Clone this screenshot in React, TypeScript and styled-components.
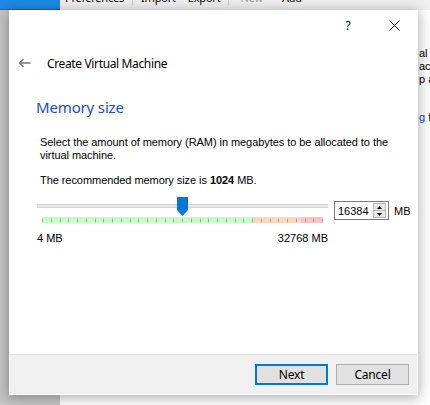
import React from "react";
import styled, { createGlobalStyle } from "styled-components";

const GlobalStyle = createGlobalStyle`
  html, body { margin: 0; padding: 0; }
  body {
    width: 430px;
    height: 405px;
    overflow: hidden;
    background: #ffffff;
    font-family: "Liberation Sans", Arial, sans-serif;
  }
`;

const UI_FONT = `"Noto Sans", "Open Sans", sans-serif`;
const DLG_FONT = `"Liberation Sans", Arial, sans-serif`;

const Desktop = styled.div`
  position: relative;
  width: 430px;
  height: 405px;
  overflow: hidden;
`;

const MainWindow = styled.div`
  display: flex;
  flex-direction: column;
  width: 100%;
  height: 100%;
`;

const TopStrip = styled.div`
  display: flex;
  height: 10px;
  flex: none;
`;

const BlueTab = styled.div`
  width: 60px;
  box-sizing: border-box;
  background: #1c8ae6;
  border-bottom: 1px solid #0b6bc0;
`;

const Toolbar = styled.div`
  flex: 1;
  display: flex;
  align-items: flex-end;
  background: #f0f0f0;
  overflow: hidden;
  font-family: ${UI_FONT};
  font-size: 11px;
  line-height: 12px;
  letter-spacing: -0.2px;
`;

const ToolItem = styled.span<{ $muted?: boolean; $pad: number }>`
  margin-bottom: 6px;
  padding-left: ${(p) => p.$pad}px;
  color: ${(p) => (p.$muted ? "#a0a0a0" : "#000")};
  white-space: nowrap;
`;

const ToolSep = styled.span<{ $pad: number }>`
  align-self: stretch;
  width: 1px;
  margin-left: ${(p) => p.$pad}px;
  margin-bottom: 5px;
  background: #c8c8c8;
`;

const MainBody = styled.div`
  flex: 1;
  display: flex;
`;

const Sidebar = styled.div`
  width: 60px;
  background: #c6c6c6;
`;

const Pane = styled.div`
  flex: 1;
  background: #ffffff;
  padding: 37px 0 0 359px;
  font-family: ${DLG_FONT};
  font-size: 11px;
  line-height: 12.8px;
  color: #000;
  white-space: pre;
  overflow: hidden;
`;

const Link = styled.span`
  color: #0645c8;
  text-decoration: underline;
`;

const Dialog = styled.div`
  position: absolute;
  left: 9px;
  top: 10px;
  width: 409px;
  height: 385px;
  box-sizing: border-box;
  border: 1px solid #ffffff;
  background: #ffffff;
  box-shadow: 0 2px 12px 1px rgba(0, 0, 0, 0.32);
  display: flex;
  flex-direction: column;
`;

const TitleBar = styled.div`
  display: flex;
  justify-content: flex-end;
  height: 29px;
  flex: none;
`;

const CaptionButton = styled.div`
  width: 46px;
  height: 29px;
  display: flex;
  align-items: center;
  justify-content: center;
  font-family: ${UI_FONT};
  font-size: 12px;
  color: #000;
`;

const Header = styled.div`
  display: flex;
  align-items: center;
  height: 28px;
  margin-top: 9px;
  padding-left: 8px;
  flex: none;
`;

const HeaderTitle = styled.span`
  margin: 2px 0 0 16px;
  font-family: ${UI_FONT};
  font-size: 12px;
  line-height: 16px;
  letter-spacing: -0.36px;
  color: #000;
`;

const Page = styled.div`
  display: flex;
  flex-direction: column;
  padding-left: 26px;
`;

const Heading = styled.h1`
  margin: 20px 0 0 0;
  font-family: ${UI_FONT};
  font-weight: 400;
  font-size: 15px;
  line-height: 20px;
  letter-spacing: -0.15px;
  color: #1d4dc4;
`;

const Text = styled.p<{ $top: number }>`
  margin: ${(p) => p.$top}px 0 0 0;
  padding-left: 4px;
  width: 360px;
  font-family: ${DLG_FONT};
  font-size: 11px;
  line-height: 13px;
  letter-spacing: -0.06px;
  color: #000;
`;

const SliderRow = styled.div`
  display: flex;
  align-items: flex-start;
  margin: 10px 0 0 1px;
`;

const Slider = styled.div`
  position: relative;
  width: 291px;
  height: 27px;
  flex: none;
`;

const Track = styled.div`
  position: absolute;
  left: 0;
  right: 0;
  top: 7px;
  height: 4px;
  box-sizing: border-box;
  background: #e7e7e7;
  border-top: 1px solid #d6d6d6;
  border-bottom: 1px solid #d6d6d6;
`;

const Scale = styled.svg`
  position: absolute;
  left: 5px;
  top: 20px;
`;

const Handle = styled.svg`
  position: absolute;
  top: 0;
`;

const SpinBox = styled.div`
  display: flex;
  align-items: center;
  width: 55px;
  height: 19px;
  box-sizing: border-box;
  margin: 4px 0 0 6px;
  border: 1px solid #7a7a7a;
  background: #fff;
`;

const SpinValue = styled.span`
  flex: 1;
  padding-left: 3px;
  font-family: ${DLG_FONT};
  font-size: 11px;
  color: #000;
`;

const SpinButtons = styled.div`
  display: flex;
  flex-direction: column;
  width: 13px;
  height: 15px;
  margin-right: 2px;
  box-sizing: border-box;
  border: 1px solid #b9b9b9;
  background: #e8e8e8;
`;

const SpinHalf = styled.div<{ $top?: boolean }>`
  flex: 1;
  display: flex;
  align-items: center;
  justify-content: center;
  border-bottom: ${(p) => (p.$top ? "1px solid #b9b9b9" : "none")};
`;

const Unit = styled.span`
  margin: 8px 0 0 5px;
  font-family: ${DLG_FONT};
  font-size: 11px;
  line-height: 13px;
  color: #000;
`;

const Limits = styled.div`
  display: flex;
  justify-content: space-between;
  width: 291px;
  margin: 8px 0 0 1px;
  font-family: ${DLG_FONT};
  font-size: 11px;
  line-height: 13px;
  color: #000;
`;

const Footer = styled.div`
  margin-top: auto;
  display: flex;
  justify-content: flex-end;
  gap: 8px;
  height: 40px;
  box-sizing: border-box;
  padding: 9px 8px 0 0;
  border-top: 1px solid #dfdfdf;
  background: #f0f0f0;
  flex: none;
`;

const Button = styled.button<{ $primary?: boolean }>`
  width: 73px;
  height: 21px;
  box-sizing: border-box;
  padding: 0;
  border: ${(p) => (p.$primary ? "2px solid #0078d7" : "1px solid #adadad")};
  background: #e1e1e1;
  font-family: ${UI_FONT};
  font-size: 12px;
  letter-spacing: -0.2px;
  color: #000;
  display: flex;
  align-items: center;
  justify-content: center;
`;

const MIN = 4;
const MAX = 32768;
const VALUE = 16384;
const SCALE_W = 281;
const GREEN_END = 210;
const PEACH_END = 259;

export default function App() {
  const handleLeft = 5 + ((VALUE - MIN) / (MAX - MIN)) * SCALE_W - 5;
  const ticks = Array.from({ length: 33 }, (_, i) => 0.5 + (i * (SCALE_W - 1)) / 32);
  return (
    <>
      <GlobalStyle />
      <Desktop>
        <MainWindow>
          <TopStrip>
            <BlueTab />
            <Toolbar>
              <ToolItem $pad={5}>Preferences</ToolItem>
              <ToolSep $pad={8} />
              <ToolItem $pad={8}>Import</ToolItem>
              <ToolItem $pad={12}>Export</ToolItem>
              <ToolSep $pad={8} />
              <ToolItem $pad={11} $muted>
                New
              </ToolItem>
              <ToolItem $pad={19}>Add</ToolItem>
            </Toolbar>
          </TopStrip>
          <MainBody>
            <Sidebar />
            <Pane>
              {"al\nac\np a\n\n\n"}
              <Link>g</Link>
              {" f"}
            </Pane>
          </MainBody>
        </MainWindow>

        <Dialog>
          <TitleBar>
            <CaptionButton>?</CaptionButton>
            <CaptionButton>
              <svg width="11" height="11" viewBox="0 0 11 11">
                <path d="M0.5 0.5 L10.5 10.5 M10.5 0.5 L0.5 10.5" stroke="#000" strokeWidth="1" fill="none" />
              </svg>
            </CaptionButton>
          </TitleBar>
          <Header>
            <svg width="13" height="10" viewBox="0 0 13 10">
              <path d="M12.5 5 H1.5 M5.5 1 L1.5 5 L5.5 9" stroke="#7a7a7a" strokeWidth="1.4" fill="none" />
            </svg>
            <HeaderTitle>Create Virtual Machine</HeaderTitle>
          </Header>
          <Page>
            <Heading>Memory size</Heading>
            <Text $top={19}>
              Select the amount of memory (RAM) in megabytes to be allocated to the virtual machine.
            </Text>
            <Text $top={12}>
              The recommended memory size is <b>1024</b> MB.
            </Text>
            <SliderRow>
              <Slider>
                <Track />
                <Scale width={SCALE_W} height={6} viewBox={`0 0 ${SCALE_W} 6`}>
                  <rect x="0" y="0" width={GREEN_END} height="6" fill="#c6fcc6" />
                  <rect x={GREEN_END} y="0" width={PEACH_END - GREEN_END} height="6" fill="#fdd6c2" />
                  <rect x={PEACH_END} y="0" width={SCALE_W - PEACH_END} height="6" fill="#fdc2c2" />
                  {ticks.map((x, i) => (
                    <line key={i} x1={Math.round(x - 0.5) + 0.5} x2={Math.round(x - 0.5) + 0.5} y1="1.5" y2="5" stroke="#a4a4a4" strokeWidth="1" />
                  ))}
                </Scale>
                <Handle width="11" height="19" viewBox="0 0 11 19" style={{ left: `${handleLeft}px` }}>
                  <path d="M0 0 H11 V13 L5.5 19 L0 13 Z" fill="#0078d7" />
                </Handle>
              </Slider>
              <SpinBox>
                <SpinValue>16384</SpinValue>
                <SpinButtons>
                  <SpinHalf $top>
                    <svg width="5" height="3" viewBox="0 0 5 3">
                      <path d="M0 3 L2.5 0 L5 3 Z" fill="#000" />
                    </svg>
                  </SpinHalf>
                  <SpinHalf>
                    <svg width="5" height="3" viewBox="0 0 5 3">
                      <path d="M0 0 L2.5 3 L5 0 Z" fill="#000" />
                    </svg>
                  </SpinHalf>
                </SpinButtons>
              </SpinBox>
              <Unit>MB</Unit>
            </SliderRow>
            <Limits>
              <span>4 MB</span>
              <span>32768 MB</span>
            </Limits>
          </Page>
          <Footer>
            <Button $primary>Next</Button>
            <Button>Cancel</Button>
          </Footer>
        </Dialog>
      </Desktop>
    </>
  );
}
